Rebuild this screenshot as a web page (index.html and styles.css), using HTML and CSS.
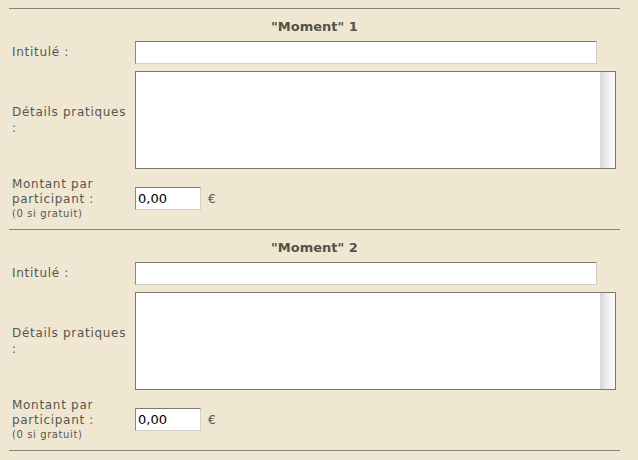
FILE: index.html
```html
<!DOCTYPE html>
<html lang="fr">
<head>
<meta charset="utf-8">
<title>Moments</title>
<link rel="stylesheet" href="styles.css">
</head>
<body>
<div class="page">
  <section class="moment">
    <h2 class="moment-title">"Moment" 1</h2>
    <div class="row row-title">
      <label class="label">Intitulé :</label>
      <input class="text-input" type="text">
    </div>
    <div class="row row-details">
      <label class="label">Détails pratiques :</label>
      <div class="area">
        <textarea class="area-text"></textarea>
        <div class="area-scroll"></div>
      </div>
    </div>
    <div class="row row-amount">
      <label class="label">Montant par participant :<span class="hint">(0 si gratuit)</span></label>
      <div class="amount">
        <input class="amount-input" type="text" value="0,00">
        <span class="currency">€</span>
      </div>
    </div>
  </section>
  <section class="moment">
    <h2 class="moment-title">"Moment" 2</h2>
    <div class="row row-title">
      <label class="label">Intitulé :</label>
      <input class="text-input" type="text">
    </div>
    <div class="row row-details">
      <label class="label">Détails pratiques :</label>
      <div class="area">
        <textarea class="area-text"></textarea>
        <div class="area-scroll"></div>
      </div>
    </div>
    <div class="row row-amount">
      <label class="label">Montant par participant :<span class="hint">(0 si gratuit)</span></label>
      <div class="amount">
        <input class="amount-input" type="text" value="0,00">
        <span class="currency">€</span>
      </div>
    </div>
  </section>
  <div class="end-rule"></div>
</div>
</body>
</html>
```
FILE: styles.css
```css
html, body {
  margin: 0;
  padding: 0;
  background: #f0e7d3;
}
body {
  font-family: "DejaVu Sans", Verdana, sans-serif;
  color: #585650;
  font-size: 12px;
}
.page {
  padding-top: 8px;
  padding-left: 9px;
  width: 611px;
}
.moment {
  border-top: 1px solid #8a8476;
  padding-top: 10px;
  padding-bottom: 9px;
}
.end-rule {
  border-top: 1px solid #8a8476;
}
.moment-title {
  margin: 0 0 6px;
  text-align: center;
  font-size: 13px;
  line-height: 16px;
  font-weight: bold;
  color: #545249;
}
.row {
  display: grid;
  grid-template-columns: 126px 1fr;
  align-items: center;
}
.row-details {
  margin-top: 7px;
}
.row-amount {
  margin-top: 8px;
}
.label {
  padding-left: 3px;
  line-height: 15px;
  letter-spacing: 0.7px;
}
.row-details .label {
  padding-right: 6px;
  line-height: 16px;
}
.row-amount .label {
  padding-right: 20px;
}
.hint {
  display: block;
  font-size: 10px;
  line-height: 13px;
  letter-spacing: 0.6px;
}
.text-input {
  box-sizing: border-box;
  width: 462px;
  height: 23px;
  margin: 0;
  padding: 2px 3px;
  background: #fff;
  border: 1px solid #d4d0c6;
  border-top-color: #807a6e;
  border-left-color: #8e897f;
  font: 13px "DejaVu Sans", Verdana, sans-serif;
  outline: none;
}
.area {
  display: flex;
  box-sizing: border-box;
  width: 481px;
  height: 98px;
  border: 1px solid #7c776b;
  background: #fff;
}
.area-text {
  flex: 1;
  margin: 0;
  border: 0;
  padding: 2px 3px;
  resize: none;
  outline: none;
  background: #fff;
  font: 13px "DejaVu Sans", Verdana, sans-serif;
}
.area-scroll {
  width: 15px;
  background: linear-gradient(to right, #d6d6d6 0%, #e8e8e8 35%, #f7f7f7 75%, #fdfdfd 100%);
}
.amount {
  display: flex;
  align-items: center;
}
.amount-input {
  box-sizing: border-box;
  width: 66px;
  height: 23px;
  margin: 0;
  padding: 1px 2px;
  background: #fff;
  border: 1px solid #d4d0c6;
  border-top-color: #807a6e;
  border-left-color: #8e897f;
  font: 13px "DejaVu Sans", Verdana, sans-serif;
  color: #000;
  outline: none;
}
.currency {
  margin-left: 7px;
  font-size: 12px;
}
```
